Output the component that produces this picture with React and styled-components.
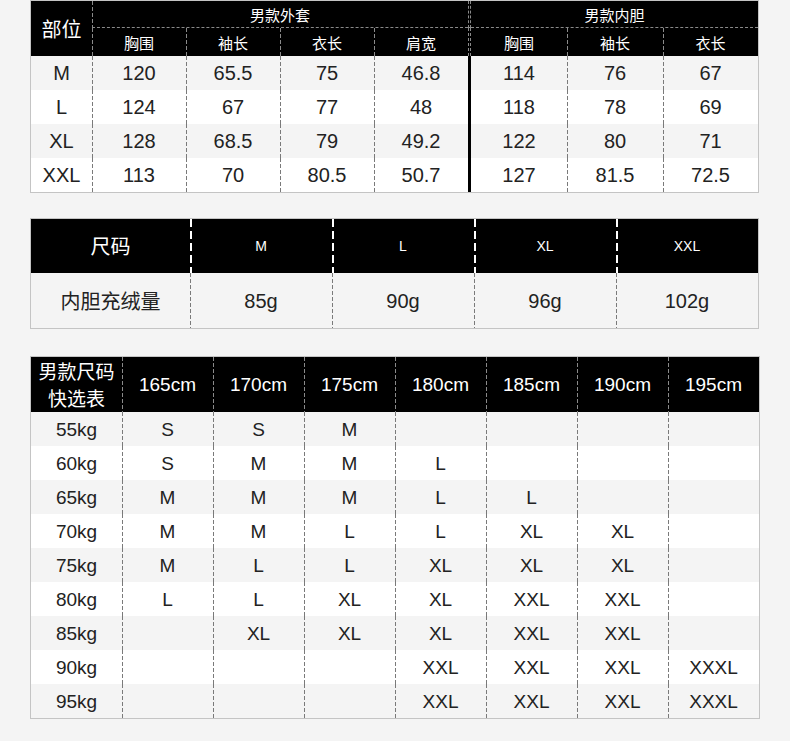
import React from 'react';
import styled, { createGlobalStyle, css } from 'styled-components';

const Global = createGlobalStyle`
  html, body { margin: 0; padding: 0; background: #f4f4f4; }
  body { font-family: "Liberation Sans", Arial, "Noto Sans CJK SC", sans-serif; color: #222; }
  * { box-sizing: border-box; }
`;

const CJK = `"Noto Sans CJK SC", "Liberation Sans", sans-serif`;
const LATIN = `"Liberation Sans", Arial, "Noto Sans CJK SC", sans-serif`;

const vDash = (color, w, on, off) => css`
  background-image: repeating-linear-gradient(to bottom, ${color} 0 ${on}px, transparent ${on}px ${on + off}px);
  background-size: ${w}px 100%;
  background-repeat: no-repeat;
  background-position: left top;
`;

const Page = styled.div`
  display: flex;
  flex-direction: column;
  align-items: flex-start;
  padding-left: 30px;
`;

const Grid = styled.div`
  display: grid;
  grid-template-columns: ${(p) => p.$cols};
  grid-template-rows: ${(p) => p.$rows};
  border: 1px solid #c4c4c4;
  margin-top: ${(p) => p.$top || 0}px;
  background: #fff;
`;

const Cell = styled.div`
  display: flex;
  align-items: center;
  justify-content: center;
  text-align: center;
  white-space: nowrap;
  background-color: ${(p) => p.$bg || '#fff'};
  color: #222;
  font-family: ${(p) => (p.$cjk ? CJK : LATIN)};
  font-size: ${(p) => p.$size || 20}px;
  line-height: 1;
  ${(p) => p.$line && vDash('#7a7a7a', 1, 4, 2)}
`;

const Head = styled.div`
  display: flex;
  flex-direction: ${(p) => (p.$stack ? 'column' : 'row')};
  align-items: center;
  justify-content: center;
  text-align: center;
  white-space: nowrap;
  background-color: #000;
  color: #fff;
  font-family: ${(p) => (p.$cjk ? CJK : LATIN)};
  font-size: ${(p) => p.$size || 15}px;
  line-height: ${(p) => p.$lh || 1};
  grid-column: ${(p) => (p.$colSpan ? `span ${p.$colSpan}` : 'auto')};
  grid-row: ${(p) => (p.$rowSpan ? `span ${p.$rowSpan}` : 'auto')};
  border-bottom: ${(p) => (p.$under ? '1px dashed #8a8a8a' : 'none')};
  ${(p) => p.$line === 'thin' && vDash('#8a8a8a', 1, 4, 2)}
  ${(p) => p.$line === 'bold' && vDash('#ffffff', 2, 8, 4)}
`;

const HeadDivider = styled.div`
  background-color: #000;
  border-left: 1px dashed #8a8a8a;
  border-right: 1px dashed #8a8a8a;
  border-bottom: ${(p) => (p.$under ? '1px dashed #8a8a8a' : 'none')};
`;

const BodyDivider = styled.div`
  background-color: #000;
`;

const Label = styled.span`
  display: block;
`;

const rowBg = (i) => (i % 2 === 0 ? '#f4f4f4' : '#ffffff');

const measures = [
  ['M', '120', '65.5', '75', '46.8', '114', '76', '67'],
  ['L', '124', '67', '77', '48', '118', '78', '69'],
  ['XL', '128', '68.5', '79', '49.2', '122', '80', '71'],
  ['XXL', '113', '70', '80.5', '50.7', '127', '81.5', '72.5'],
];

const heights = ['165cm', '170cm', '175cm', '180cm', '185cm', '190cm', '195cm'];
const picks = [
  ['55kg', 'S', 'S', 'M', '', '', '', ''],
  ['60kg', 'S', 'M', 'M', 'L', '', '', ''],
  ['65kg', 'M', 'M', 'M', 'L', 'L', '', ''],
  ['70kg', 'M', 'M', 'L', 'L', 'XL', 'XL', ''],
  ['75kg', 'M', 'L', 'L', 'XL', 'XL', 'XL', ''],
  ['80kg', 'L', 'L', 'XL', 'XL', 'XXL', 'XXL', ''],
  ['85kg', '', 'XL', 'XL', 'XL', 'XXL', 'XXL', ''],
  ['90kg', '', '', '', 'XXL', 'XXL', 'XXL', 'XXXL'],
  ['95kg', '', '', '', 'XXL', 'XXL', 'XXL', 'XXXL'],
];

function MeasureTable() {
  return (
    <Grid $cols="61px repeat(4, 94px) 3px 96px 96px 95px" $rows="27px 28px repeat(4, 34px)">
      <Head $cjk $size={20} $rowSpan={2}>部位</Head>
      <Head $cjk $size={15} $colSpan={4} $line="thin" $under>男款外套</Head>
      <HeadDivider $under />
      <Head $cjk $size={15} $colSpan={3} $under>男款内胆</Head>
      {['胸围', '袖长', '衣长', '肩宽'].map((t) => (
        <Head key={'o' + t} $cjk $size={15} $line="thin">{t}</Head>
      ))}
      <HeadDivider />
      {['胸围', '袖长', '衣长'].map((t, i) => (
        <Head key={'i' + t} $cjk $size={15} $line={i > 0 ? 'thin' : undefined}>{t}</Head>
      ))}
      {measures.map((row, r) => (
        <React.Fragment key={row[0]}>
          {row.slice(0, 5).map((v, c) => (
            <Cell key={c} $bg={rowBg(r)} $line={c > 0}>{v}</Cell>
          ))}
          <BodyDivider />
          {row.slice(5).map((v, c) => (
            <Cell key={'r' + c} $bg={rowBg(r)} $line={c > 0}>{v}</Cell>
          ))}
        </React.Fragment>
      ))}
    </Grid>
  );
}

function FillTable() {
  const sizes = ['M', 'L', 'XL', 'XXL'];
  const fills = ['85g', '90g', '96g', '102g'];
  return (
    <Grid $top={25} $cols="159px repeat(4, 142px)" $rows="54px 55px">
      <Head $cjk $size={20}>尺码</Head>
      {sizes.map((s) => (
        <Head key={s} $size={14} $line="bold">{s}</Head>
      ))}
      <Cell $cjk $bg="#f4f4f4">内胆充绒量</Cell>
      {fills.map((f) => (
        <Cell key={f} $bg="#f4f4f4" $line>{f}</Cell>
      ))}
    </Grid>
  );
}

function PickTable() {
  return (
    <Grid $top={27} $cols="91px repeat(7, 91px)" $rows="55px repeat(9, 34px)">
      <Head $cjk $stack $size={19} $lh={1.38}>
        <Label>男款尺码</Label>
        <Label>快选表</Label>
      </Head>
      {heights.map((h) => (
        <Head key={h} $size={19} $line="thin">{h}</Head>
      ))}
      {picks.map((row, r) => (
        <React.Fragment key={row[0]}>
          {row.map((v, c) => (
            <Cell key={c} $size={19} $bg={rowBg(r)} $line={c > 0}>{v}</Cell>
          ))}
        </React.Fragment>
      ))}
    </Grid>
  );
}

export default function App() {
  return (
    <>
      <Global />
      <Page>
        <MeasureTable />
        <FillTable />
        <PickTable />
      </Page>
    </>
  );
}
